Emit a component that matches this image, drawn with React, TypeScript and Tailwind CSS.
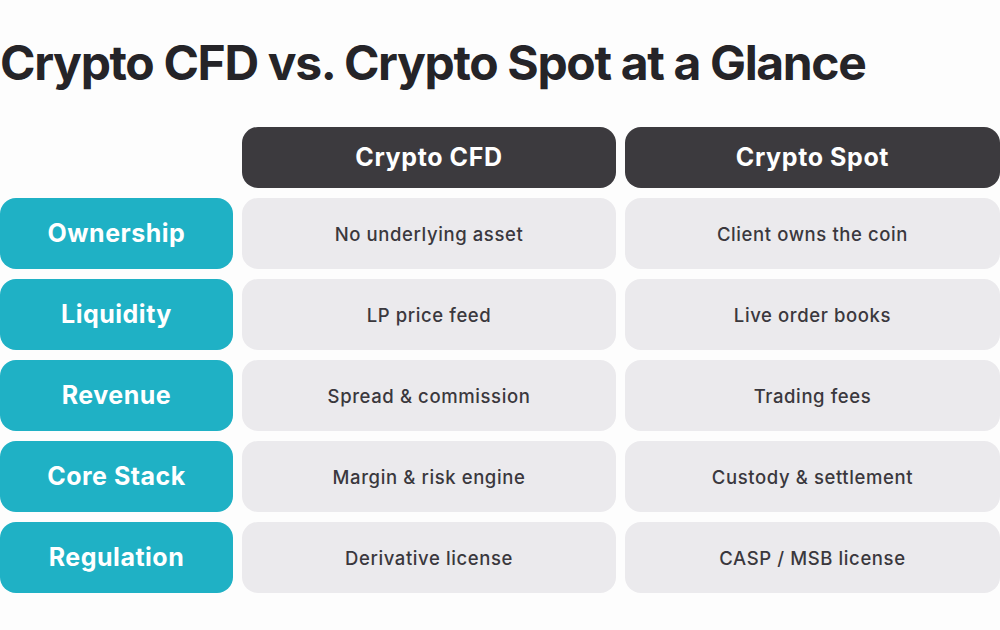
import React from "react";

const rows: [string, string, string][] = [
  ["Ownership", "No underlying asset", "Client owns the coin"],
  ["Liquidity", "LP price feed", "Live order books"],
  ["Revenue", "Spread & commission", "Trading fees"],
  ["Core Stack", "Margin & risk engine", "Custody & settlement"],
  ["Regulation", "Derivative license", "CASP / MSB license"],
];

export default function App() {
  return (
    <div
      className="w-[1000px] h-[630px] bg-[#fdfdfd] overflow-hidden"
      style={{ fontFamily: "Inter, 'Noto Sans', sans-serif" }}
    >
      <h1 className="pt-[35px] text-[48px] leading-[56px] font-bold text-[#252428] tracking-[-1.35px] whitespace-nowrap">
        Crypto CFD vs. Crypto Spot at a Glance
      </h1>
      <div className="mt-[36px] grid grid-cols-[233px_374px_375px] gap-x-[9px] gap-y-[10px]">
        <div />
        <div className="h-[61px] rounded-[16px] bg-[#3c3a3e] flex items-center justify-center text-white text-[25px] tracking-[0.6px] font-bold">
          Crypto CFD
        </div>
        <div className="h-[61px] rounded-[16px] bg-[#3c3a3e] flex items-center justify-center text-white text-[25px] tracking-[0.6px] font-bold">
          Crypto Spot
        </div>
        {rows.map(([label, a, b]) => (
          <React.Fragment key={label}>
            <div className="h-[71px] pt-[1px] rounded-[16px] bg-[#1fb1c5] flex items-center justify-center text-white text-[25px] tracking-[0.5px] font-bold">
              {label}
            </div>
            <div className="h-[71px] pt-[2px] rounded-[16px] bg-[#ebeaed] flex items-center justify-center text-[#3a383d] text-[18.5px] tracking-[0.6px] font-medium">
              {a}
            </div>
            <div className="h-[71px] pt-[2px] rounded-[16px] bg-[#ebeaed] flex items-center justify-center text-[#3a383d] text-[18.5px] tracking-[0.6px] font-medium">
              {b}
            </div>
          </React.Fragment>
        ))}
      </div>
    </div>
  );
}
